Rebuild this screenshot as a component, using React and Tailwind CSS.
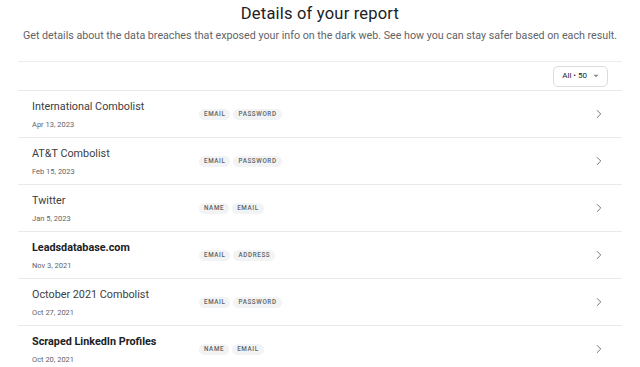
import { ChevronRight } from "lucide-react";

const breaches = [
  { name: "International Combolist", date: "Apr 13, 2023", tags: ["EMAIL", "PASSWORD"] },
  { name: "AT&T Combolist", date: "Feb 15, 2023", tags: ["EMAIL", "PASSWORD"] },
  { name: "Twitter", date: "Jan 5, 2023", tags: ["NAME", "EMAIL"] },
  { name: "Leadsdatabase.com", date: "Nov 3, 2021", tags: ["EMAIL", "ADDRESS"], unread: true },
  { name: "October 2021 Combolist", date: "Oct 27, 2021", tags: ["EMAIL", "PASSWORD"] },
  { name: "Scraped LinkedIn Profiles", date: "Oct 20, 2021", tags: ["NAME", "EMAIL"], unread: true },
];

export default function App() {
  return (
    <div className="w-[640px] h-[367px] overflow-hidden bg-white font-['Roboto',sans-serif]">
      <h1 className="pt-[4px] text-center text-[16.5px] leading-[20px] font-normal text-[#202124] tracking-[0.2px]">Details of your report</h1>
      <p className="mt-[5px] text-center text-[10.7px] leading-[14px] text-[#5f6368]">
        Get details about the data breaches that exposed your info on the dark web. See how you can stay safer based on each result.
      </p>

      <div className="mx-[18px] mt-[18px] border-t border-[#eeeeee]">
        {/* filter */}
        <div className="flex justify-end items-center h-[29px] border-b border-[#e8eaed] pr-[14px]">
          <button className="flex items-center gap-[6px] h-[21px] px-[8px] border border-[#dadce0] rounded-[5px] text-[8px] text-[#202124]">
            All • 50
            <svg width="6" height="4" viewBox="0 0 6 4"><path d="M0.5 0.8 L3 3.2 L5.5 0.8 Z" fill="#80868b" /></svg>
          </button>
        </div>

        {breaches.map((b, i) => (
          <div key={i} className="flex items-center h-[47px] border-b border-[#e8eaed] pl-[14px] pr-[16px]">
            <div className="w-[167px] pt-[1px]">
              <div className={`text-[10.8px] leading-[14px] ${b.unread ? "font-bold text-[#202124]" : "font-normal text-[#3c4043]"}`}>{b.name}</div>
              <div className="mt-[6px] text-[7.5px] leading-[10px] text-[#5f6368]">{b.date}</div>
            </div>
            <div className="flex gap-[3px]">
              {b.tags.map(t => (
                <span key={t} className="h-[11px] px-[5px] rounded-full bg-[#f1f3f4] text-[6.3px] leading-[11px] font-medium tracking-[0.6px] text-[#5f6368]">{t}</span>
              ))}
            </div>
            <div className="ml-auto text-[#5f6368]">
              <ChevronRight size={14} strokeWidth={1.5} />
            </div>
          </div>
        ))}
      </div>
    </div>
  );
}
